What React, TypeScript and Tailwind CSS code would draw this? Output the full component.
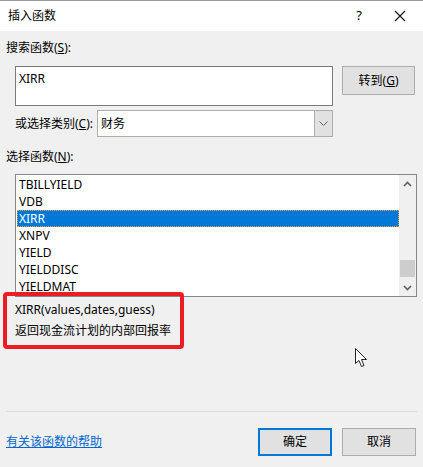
import React from "react";

const font = { fontFamily: '"Noto Sans", "Noto Sans CJK SC", sans-serif' };

function Chevron({ up }: { up?: boolean }) {
  return (
    <svg width="9" height="6" viewBox="0 0 9 6">
      <path
        d={up ? "M1 5 L4.5 1.5 L8 5" : "M1 1 L4.5 4.5 L8 1"}
        stroke="#606060"
        strokeWidth="1.6"
        fill="none"
      />
    </svg>
  );
}

export default function App() {
  const items = ["TBILLYIELD", "VDB", "XIRR", "XNPV", "YIELD", "YIELDDISC", "YIELDMAT"];
  return (
    <div
      className="relative w-[423px] h-[467px] bg-[#f0f0f0] text-[12px] text-black overflow-hidden"
      style={font}
    >
      {/* title bar */}
      <div className="h-[31px] bg-white border-t border-[#9a9a9a] flex items-center pl-[8px]">
        <span className="flex-1 leading-[16px]">插入函数</span>
        <span className="w-[20px] text-center text-[13px] mr-[25px]">?</span>
        <svg width="12" height="12" viewBox="0 0 12 12" className="mr-[17px]">
          <path d="M1 1 L11 11 M11 1 L1 11" stroke="#111" strokeWidth="1.1" />
        </svg>
      </div>

      <div className="px-[6px]">
        <div className="pt-[9px] leading-[16px]">
          搜索函数(<span className="underline">S</span>):
        </div>

        <div className="flex mt-[10px] ml-[9px]">
          <div className="w-[318px] h-[40px] bg-white border border-[#7a7a7a] pl-[3px] pt-[4px] leading-[16px]">
            XIRR
          </div>
          <div className="ml-[9px] w-[73px] h-[29px] bg-[#e1e1e1] border border-[#adadad] flex items-center justify-center">
            转到(<span className="underline">G</span>)
          </div>
        </div>

        <div className="flex items-center mt-[4px] ml-[9px]">
          <span className="w-[82px] leading-[16px]">
            或选择类别(<span className="underline">C</span>):
          </span>
          <div className="w-[236px] h-[27px] bg-white border border-[#adadad] flex">
            <span className="flex-1 pl-[3px] flex items-center">财务</span>
            <div className="w-[18px] bg-[#e1e1e1] border-l border-[#adadad] flex items-center justify-center">
              <svg width="9" height="5" viewBox="0 0 9 5">
                <path d="M0.5 0.5 L4.5 4.5 L8.5 0.5" stroke="#606060" strokeWidth="1" fill="none" />
              </svg>
            </div>
          </div>
        </div>

        <div className="mt-[12px] leading-[16px]">
          选择函数(<span className="underline">N</span>):
        </div>

        <div className="mt-[9px] ml-[9px] w-[402px] h-[123px] border border-[#828790] bg-white flex">
          <div className="flex-1 pt-[1px] pl-[1px]">
            {items.map((it) => (
              <div
                key={it}
                className={
                  "h-[17px] leading-[17px] pl-[2px] " +
                  (it === "XIRR"
                    ? "bg-[#0078d7] text-white outline-1 outline-dotted outline-[#f0a030] -outline-offset-1"
                    : "")
                }
              >
                {it}
              </div>
            ))}
          </div>
          <div className="w-[17px] bg-[#f0f0f0] flex flex-col">
            <div className="h-[17px] flex items-center justify-center">
              <Chevron up />
            </div>
            <div className="flex-1 flex flex-col justify-end">
              <div className="h-[17px] bg-[#cdcdcd] mx-[1px] mb-[2px]" />
            </div>
            <div className="h-[17px] flex items-center justify-center">
              <Chevron />
            </div>
          </div>
        </div>

        <div className="ml-[9px] mt-[5px] leading-[16px]">XIRR(values,dates,guess)</div>
        <div className="ml-[9px] mt-[5px] leading-[16px]">返回现金流计划的内部回报率</div>

        <div className="mt-[72px] h-px bg-[#dadada] mr-[0px]" />

        <div className="flex items-center mt-[16px]">
          <span className="flex-1 text-[#0066cc] underline leading-[16px]">有关该函数的帮助</span>
          <div className="w-[74px] h-[28px] bg-[#e1e1e1] border-2 border-[#0078d7] flex items-center justify-center">
            确定
          </div>
          <div className="ml-[10px] mr-[1px] w-[74px] h-[28px] bg-[#e1e1e1] border border-[#adadad] flex items-center justify-center">
            取消
          </div>
        </div>
      </div>

      {/* red annotation box */}
      <div className="absolute left-[3px] top-[292px] w-[181px] h-[57px] border-[4px] border-[#ec1c24] rounded-[4px] pointer-events-none" />

      {/* mouse cursor */}
      <svg className="absolute left-[355px] top-[348px]" width="13" height="20" viewBox="0 0 13 20">
        <path
          d="M0.5 0.5 L0.5 15.5 L4 12.5 L6.5 18.5 L9 17.5 L6.5 11.5 L11.5 11.5 Z"
          fill="white"
          stroke="#222"
          strokeWidth="1"
        />
      </svg>
    </div>
  );
}
